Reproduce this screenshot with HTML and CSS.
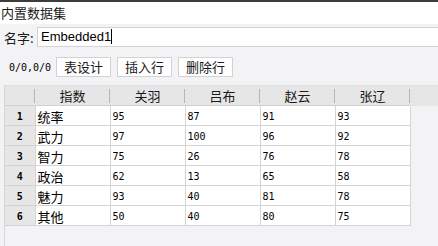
FILE: index.html
```html
<!DOCTYPE html>
<html lang="zh">
<head>
  <meta charset="UTF-8" />
  <title>内置数据集</title>
  <link rel="stylesheet" href="styles.css">
</head>
<body>

  <div class="title-bar">内置数据集</div>

  <div class="name-row">
    <label class="name-label">名字:</label>
    <div class="name-input">Embedded1<span class="caret"></span></div>
  </div>

  <div class="toolbar">
    <span class="pos">0/0,0/0</span>
    <button class="tool-btn">表设计</button>
    <button class="tool-btn">插入行</button>
    <button class="tool-btn">删除行</button>
  </div>

  <div class="grid">
    <table class="data-table">
      <thead>
        <tr>
          <th class="corner"></th>
          <th>指数</th>
          <th>关羽</th>
          <th>吕布</th>
          <th>赵云</th>
          <th>张辽</th>
          <th class="filler"></th>
        </tr>
      </thead>
      <tbody>
        <tr><td class="num">1</td><td class="name">统率</td><td>95</td><td>87</td><td>91</td><td>93</td><td class="filler"></td></tr>
        <tr><td class="num">2</td><td class="name">武力</td><td>97</td><td>100</td><td>96</td><td>92</td><td class="filler"></td></tr>
        <tr><td class="num">3</td><td class="name">智力</td><td>75</td><td>26</td><td>76</td><td>78</td><td class="filler"></td></tr>
        <tr><td class="num">4</td><td class="name">政治</td><td>62</td><td>13</td><td>65</td><td>58</td><td class="filler"></td></tr>
        <tr><td class="num">5</td><td class="name">魅力</td><td>93</td><td>40</td><td>81</td><td>78</td><td class="filler"></td></tr>
        <tr><td class="num">6</td><td class="name">其他</td><td>50</td><td>40</td><td>80</td><td>75</td><td class="filler"></td></tr>
      </tbody>
    </table>
  </div>

</body>
</html>
```

FILE: styles.css
```css
body {
  margin: 0;
  height: 246px;
  overflow: hidden;
  font-family: "Noto Sans CJK SC", "Liberation Sans", sans-serif;
  font-size: 13px;
  color: #1a1a1a;
  background-color: #f3f3f5;
}

.title-bar {
  height: 22px;
  line-height: 21px;
  padding-left: 1px;
  border-top: 2px solid #3c3c3c;
  background-color: #fff;
}

.name-row {
  display: flex;
  align-items: center;
  margin-top: 3px;
  height: 20px;
}

.name-label {
  width: 33px;
  padding-left: 4px;
}

.name-input {
  flex: 1;
  height: 18px;
  line-height: 18px;
  padding-left: 3px;
  border: 1px solid #d4d4d4;
  border-right: none;
  background-color: #fff;
  font-family: "Liberation Sans", sans-serif;
  color: #000;
}

.caret {
  display: inline-block;
  width: 1px;
  height: 15px;
  vertical-align: -3px;
  background-color: #000;
}

.toolbar {
  display: flex;
  align-items: center;
  gap: 6px;
  margin-top: 10px;
  height: 20px;
  padding-left: 9px;
}

.pos {
  width: 41px;
  font-family: "DejaVu Sans Mono", monospace;
  font-size: 10px;
  color: #000;
}

.tool-btn {
  width: 55px;
  height: 20px;
  padding: 0;
  border: 1px solid #d2d2d2;
  background-color: #fff;
  font-family: "Noto Sans CJK SC", sans-serif;
  font-size: 13px;
  line-height: 16px;
  color: #1a1a1a;
}

.grid {
  margin: 8px 0 0 4px;
  height: 160px;
  border-left: 1px solid #d6d6d6;
  border-top: 1px solid #e0e0e0;
}

.data-table {
  width: 100%;
  border-collapse: collapse;
  table-layout: fixed;
}

.data-table th {
  position: relative;
  width: 75px;
  height: 19px;
  padding: 0;
  font-weight: normal;
  line-height: 17px;
  background-color: #e6e6e6;
  border-bottom: 1px solid #d0d0d0;
}

.data-table th::after {
  content: "";
  position: absolute;
  right: 0;
  top: 3px;
  width: 1px;
  height: 14px;
  background-color: #b8b8a6;
}

.data-table th.corner {
  width: 30px;
}

.data-table th.filler {
  width: auto;
  border-bottom: none;
}

.data-table th.filler::after {
  display: none;
}

.data-table td {
  height: 20px;
  box-sizing: border-box;
  padding: 2px 0 0 2px;
  line-height: 15px;
  border: 1px solid #d4d4d4;
  background-color: #fff;
  font-family: "DejaVu Sans Mono", monospace;
  font-size: 10px;
  color: #000;
}

.data-table td.num {
  padding-left: 0;
  text-align: center;
  font-weight: bold;
  background-color: #e6e6e6;
  border-left: none;
}

.data-table td.name {
  font-family: "Noto Sans CJK SC", sans-serif;
  font-size: 13px;
  padding-top: 1px;
}

.data-table td.filler {
  border: none;
  border-left: 1px solid #d4d4d4;
  background-color: transparent;
}
```
